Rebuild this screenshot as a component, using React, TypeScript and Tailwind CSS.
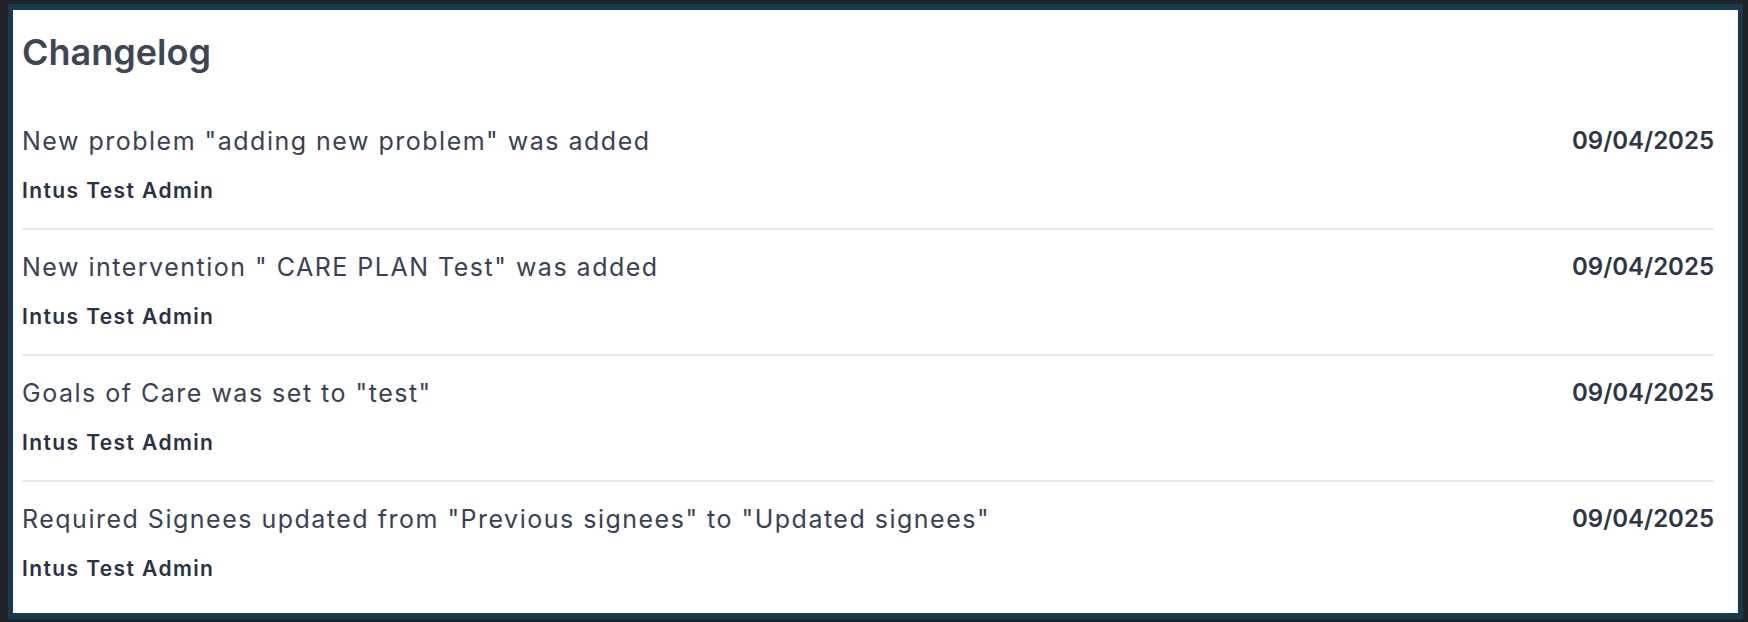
const entries = [
  { text: 'New problem "adding new problem" was added', author: "Intus Test Admin", date: "09/04/2025" },
  { text: 'New intervention " CARE PLAN Test" was added', author: "Intus Test Admin", date: "09/04/2025" },
  { text: 'Goals of Care was set to "test"', author: "Intus Test Admin", date: "09/04/2025" },
  { text: 'Required Signees updated from "Previous signees" to "Updated signees"', author: "Intus Test Admin", date: "09/04/2025" },
];

export default function App() {
  return (
    <div className="w-full h-[622px] bg-[#1f2327] pl-[8px] pt-[4px] pr-[5px] pb-[3px] font-['Inter',sans-serif]">
      <div className="h-full bg-white border-[#173a4c] border-l-[5px] border-r-[5px] border-t-[6px] border-b-[6px] pl-[9px] pr-[24px] pt-[20px]">
        <h2 className="text-[36px] leading-[44px] font-semibold text-[#3f4653]">Changelog</h2>

        <div className="mt-[30px]">
          {entries.map((e, i) => (
            <div
              key={i}
              className={
                "flex justify-between items-start pt-[21px] pb-[23px] " +
                (i < entries.length - 1 ? "border-b-2 border-[#e6e7ec]" : "")
              }
            >
              <div className="flex flex-col gap-[20px]">
                <span className="text-[25px] leading-[32px] tracking-[1.5px] text-[#3a4157]">{e.text}</span>
                <span className="text-[21px] leading-[28px] tracking-[1.4px] font-semibold text-[#2a3045]">{e.author}</span>
              </div>
              <span className="text-[24px] leading-[32px] font-semibold text-[#2f3548]">{e.date}</span>
            </div>
          ))}
        </div>
      </div>
    </div>
  );
}
